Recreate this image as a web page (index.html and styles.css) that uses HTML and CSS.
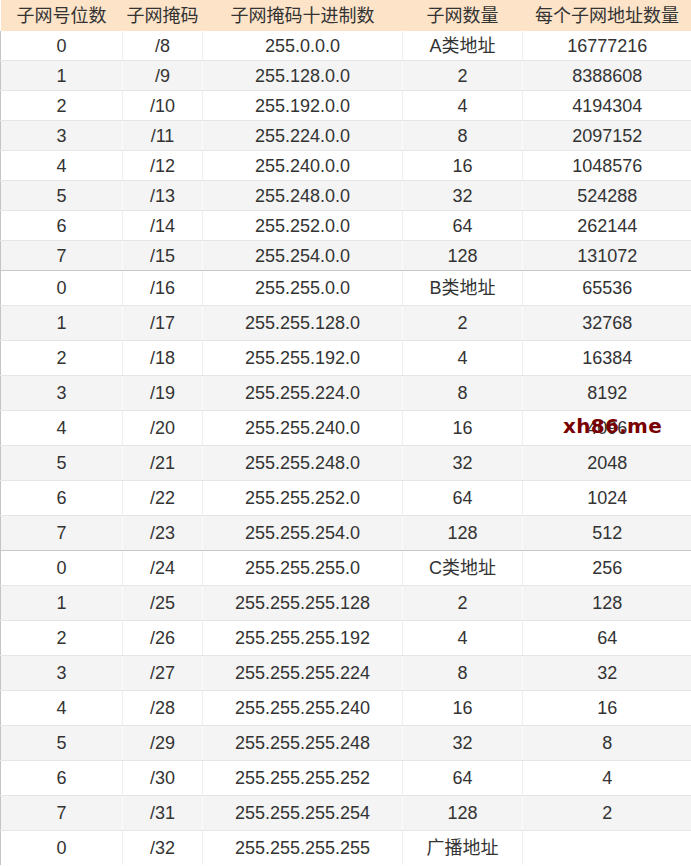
FILE: index.html
```html
<!DOCTYPE html>
<html lang="zh">
<head>
<meta charset="utf-8">
<link rel="stylesheet" href="styles.css">
</head>
<body>
<div class="wrap">
<table class="subnet">
<thead>
<tr><th>子网号位数</th><th>子网掩码</th><th>子网掩码十进制数</th><th>子网数量</th><th>每个子网地址数量</th></tr>
</thead>
<tbody class="sec s1">
<tr><td>0</td><td>/8</td><td>255.0.0.0</td><td>A类地址</td><td>16777216</td></tr>
<tr><td>1</td><td>/9</td><td>255.128.0.0</td><td>2</td><td>8388608</td></tr>
<tr><td>2</td><td>/10</td><td>255.192.0.0</td><td>4</td><td>4194304</td></tr>
<tr><td>3</td><td>/11</td><td>255.224.0.0</td><td>8</td><td>2097152</td></tr>
<tr><td>4</td><td>/12</td><td>255.240.0.0</td><td>16</td><td>1048576</td></tr>
<tr><td>5</td><td>/13</td><td>255.248.0.0</td><td>32</td><td>524288</td></tr>
<tr><td>6</td><td>/14</td><td>255.252.0.0</td><td>64</td><td>262144</td></tr>
<tr class="end"><td>7</td><td>/15</td><td>255.254.0.0</td><td>128</td><td>131072</td></tr>
</tbody>
<tbody class="sec s2">
<tr><td>0</td><td>/16</td><td>255.255.0.0</td><td>B类地址</td><td>65536</td></tr>
<tr><td>1</td><td>/17</td><td>255.255.128.0</td><td>2</td><td>32768</td></tr>
<tr><td>2</td><td>/18</td><td>255.255.192.0</td><td>4</td><td>16384</td></tr>
<tr><td>3</td><td>/19</td><td>255.255.224.0</td><td>8</td><td>8192</td></tr>
<tr><td>4</td><td>/20</td><td>255.255.240.0</td><td>16</td><td>4096</td></tr>
<tr><td>5</td><td>/21</td><td>255.255.248.0</td><td>32</td><td>2048</td></tr>
<tr><td>6</td><td>/22</td><td>255.255.252.0</td><td>64</td><td>1024</td></tr>
<tr class="end"><td>7</td><td>/23</td><td>255.255.254.0</td><td>128</td><td>512</td></tr>
</tbody>
<tbody class="sec s3">
<tr><td>0</td><td>/24</td><td>255.255.255.0</td><td>C类地址</td><td>256</td></tr>
<tr><td>1</td><td>/25</td><td>255.255.255.128</td><td>2</td><td>128</td></tr>
<tr><td>2</td><td>/26</td><td>255.255.255.192</td><td>4</td><td>64</td></tr>
<tr><td>3</td><td>/27</td><td>255.255.255.224</td><td>8</td><td>32</td></tr>
<tr><td>4</td><td>/28</td><td>255.255.255.240</td><td>16</td><td>16</td></tr>
<tr><td>5</td><td>/29</td><td>255.255.255.248</td><td>32</td><td>8</td></tr>
<tr><td>6</td><td>/30</td><td>255.255.255.252</td><td>64</td><td>4</td></tr>
<tr><td>7</td><td>/31</td><td>255.255.255.254</td><td>128</td><td>2</td></tr>
<tr class="last"><td>0</td><td>/32</td><td>255.255.255.255</td><td>广播地址</td><td></td></tr>
</tbody>
</table>
<div class="watermark">xh86.me</div>
</div>
</body>
</html>
```
FILE: styles.css
```css
html, body {
  margin: 0;
  padding: 0;
  background: #fff;
}
.wrap {
  position: relative;
  width: 691px;
  height: 866px;
  overflow: hidden;
}
.subnet {
  width: 691px;
  border-collapse: collapse;
  table-layout: fixed;
  font-family: "Liberation Sans", Arial, "Noto Sans CJK SC", sans-serif;
  font-size: 18px;
  line-height: 20px;
  color: #333;
}
.subnet th:nth-child(1) { width: 122px; }
.subnet th:nth-child(2) { width: 80px; }
.subnet th:nth-child(3) { width: 200px; }
.subnet th:nth-child(4) { width: 120px; }
.subnet th:nth-child(5) { width: 169px; }
.subnet th {
  height: 31px;
  padding: 0;
  background: #fde3c8;
  font-weight: normal;
  text-align: center;
  vertical-align: middle;
  color: #333;
  border: none;
}
.subnet td {
  padding: 0;
  text-align: center;
  vertical-align: middle;
  border-left: 1px solid #eeeeee;
  border-bottom: 1px solid #e6e6e6;
}
.subnet td:first-child {
  border-left: 1px solid #c4c4c4;
}
.subnet tr:nth-child(even) td {
  background: #f4f4f4;
  border-left-color: #fbfbfb;
}
.subnet tr:nth-child(even) td:first-child {
  border-left-color: #c4c4c4;
}
.s1 td { height: 29px; }
.s2 td, .s3 td { height: 34px; }
.subnet tr.end td {
  border-bottom: 1px solid #c8c8c8;
}
.subnet tr.last td {
  border-bottom: none;
}
.watermark {
  position: absolute;
  left: 563px;
  top: 414px;
  font-family: "DejaVu Sans", sans-serif;
  font-weight: bold;
  font-size: 20px;
  color: #7a0000;
  letter-spacing: 0.3px;
}
```
